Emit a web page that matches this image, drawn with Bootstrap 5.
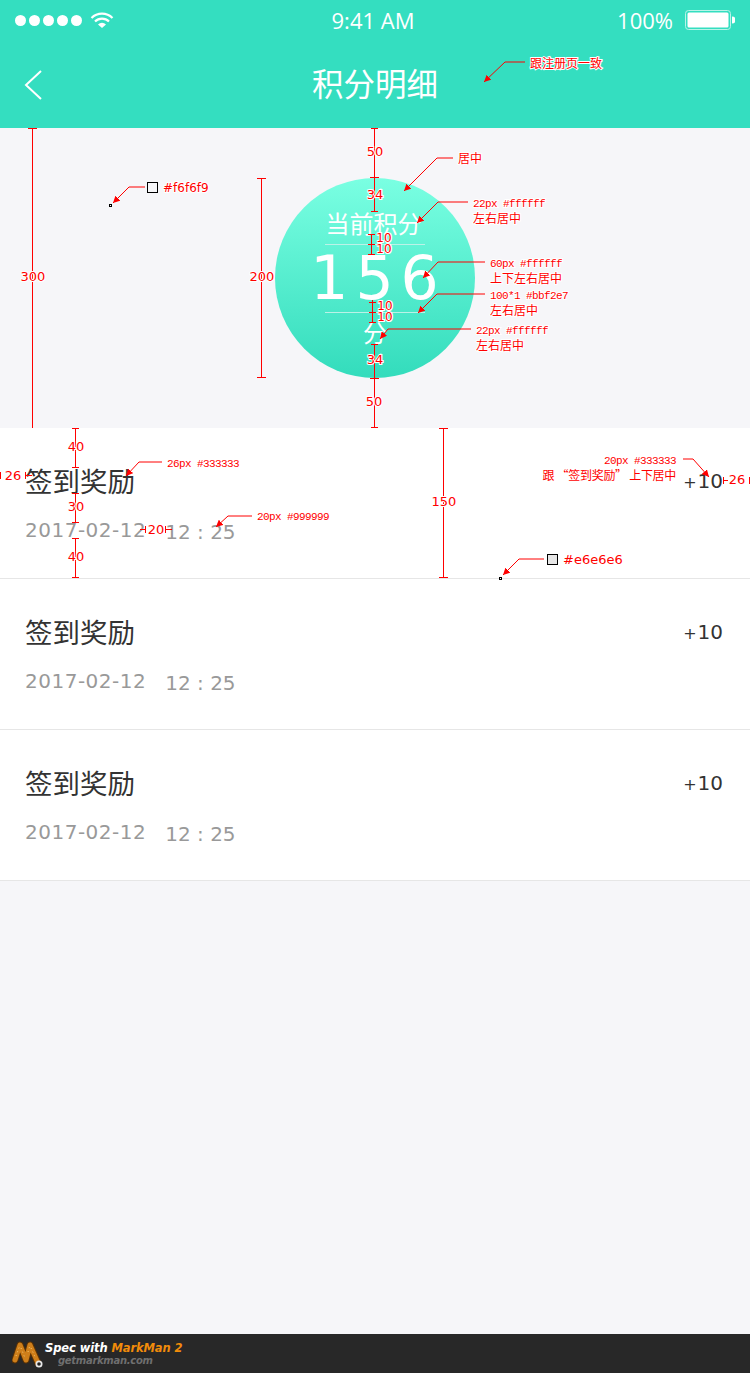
<!DOCTYPE html>
<html lang="zh-CN">
<head>
  <meta charset="UTF-8">
  <title>积分明细</title>
  <meta name="viewport" content="width=device-width, initial-scale=1">
  <link href="https://cdn.jsdelivr.net/npm/bootstrap@5.3.3/dist/css/bootstrap.min.css" rel="stylesheet">
  <style>
    html, body { margin: 0; background: #f6f6f9; }
    .spec-page {
      position: relative;
      width: 750px;
      height: 1373px;
      overflow: hidden;
      background: #f6f6f9;
      font-family: "DejaVu Sans", "Noto Sans CJK SC", sans-serif;
    }
    .app-head { height: 128px; background: #34dec0; color: #fff; flex: none; }
    .status-row { height: 40px; padding: 0 15px; font-family: "Open Sans", sans-serif; font-size: 22px; }
    .status-side { width: 240px; }
    .status-time { margin-left: -4px; }
    .status-dots { gap: 3px; margin-right: 8px; }
    .status-dots i { display: block; width: 11px; height: 11px; border-radius: 50%; background: #fff; }
    .head-row { height: 88px; position: relative; }
    .head-back { position: absolute; left: 24px; top: 29px; }
    .head-title { font-family: "Noto Sans CJK SC", sans-serif; font-size: 31.5px; line-height: 1; margin-top: -3px; }
    .score-band { height: 300px; padding-top: 50px; flex: none; }
    .score-disc {
      width: 200px;
      height: 200px;
      padding-top: 33px;
      border-radius: 50%;
      color: #fff;
      background: linear-gradient(#7affe2, #33dcbc);
      font-family: "Noto Sans CJK SC", sans-serif;
    }
    .score-cap { font-size: 24px; line-height: 23px; height: 23px; margin-left: -3px; }
    .score-unit { margin-top: -3px; margin-left: 0; }
    .score-rule { width: 100px; height: 1px; background: #bbf2e7; margin: 10px 0; flex: none; }
    .score-num { font-family: "DejaVu Sans", sans-serif; font-size: 60px; line-height: 47px; height: 47px; letter-spacing: 7px; margin-right: -6px; }
    .log-row { height: 151px; padding: 0 27px 0 25px; background: #fff; border-bottom: 1px solid #e6e6e6; flex: none; }
    .log-name { font-family: "Noto Sans CJK SC", sans-serif; font-size: 27.5px; line-height: 30px; color: #333; margin-top: 37px; }
    .log-time { font-size: 20px; line-height: 24px; color: #999; margin-top: 23px; letter-spacing: .5px; }
    .log-clock { margin-left: 19px; letter-spacing: 0; position: relative; top: 2px; }
    .log-pts { font-size: 20px; line-height: 30px; color: #333; margin-top: 38px; }
    .log-plus { font-size: 16px; margin-right: 1px; }
    .spec-foot { position: absolute; left: 0; right: 0; bottom: 0; height: 39px; background: #282828; padding-left: 12px; }
    .foot-logo { flex: none; margin-top: 4px; }
    .foot-main { font-size: 11.5px; line-height: 14px; font-weight: 700; font-style: italic; color: #fff; padding-top: 7px; letter-spacing: -.1px; }
    .foot-main span { color: #f28c0a; }
    .foot-sub { font-size: 10px; line-height: 12px; font-weight: 700; font-style: italic; color: #6f6f6f; padding-left: 13px; letter-spacing: -.3px; }
    .spec-marks { position: absolute; left: 0; top: 0; pointer-events: none; }
    .spec-marks line, .spec-marks polyline { stroke: #f00; stroke-width: 1; fill: none; }
    .spec-marks text { fill: #f00; stroke: #fff; stroke-width: 2px; paint-order: stroke; font-family: "DejaVu Sans", "Noto Sans CJK SC", sans-serif; font-size: 13px; }
    .spec-marks .mark-mono { font-family: "Liberation Mono", "Noto Sans CJK SC", monospace; font-size: 11px; letter-spacing: -.6px; }
    .spec-marks .mark-cjk { font-family: "Noto Sans CJK SC", sans-serif; font-size: 12px; }
    .spec-marks .mark-tight { letter-spacing: -.3px; }
    .spec-marks .mark-small { font-size: 12px; }
  </style>
</head>
<body>

<div class="spec-page d-flex flex-column">

  <!-- header -->
  <header class="app-head">
    <div class="status-row d-flex align-items-center justify-content-between">
      <div class="status-side d-flex align-items-center">
        <div class="status-dots d-flex"><i></i><i></i><i></i><i></i><i></i></div>
        <svg width="24" height="16" viewBox="0 0 24 16">
          <path d="M1.5 6 A15 15 0 0 1 22.5 6" fill="none" stroke="#fff" stroke-width="2.2"/>
          <path d="M5 9.5 A10 10 0 0 1 19 9.5" fill="none" stroke="#fff" stroke-width="2.2"/>
          <path d="M8 12.4 A6 6 0 0 1 16 12.4 L12 16 Z" fill="#fff"/>
        </svg>
      </div>
      <div class="status-time">9:41 AM</div>
      <div class="status-side d-flex align-items-center justify-content-end">
        <span class="me-2 pe-1">100%</span>
        <svg width="50" height="20" viewBox="0 0 50 20">
          <rect x=".5" y=".5" width="45" height="19" rx="3" fill="none" stroke="#b9f3e8"/>
          <rect x="2.5" y="2.5" width="41" height="15" rx="1.5" fill="#fff"/>
          <path d="M47 6.5 a3.5 3.5 0 0 1 0 7 Z" fill="#fff"/>
        </svg>
      </div>
    </div>
    <div class="head-row d-flex align-items-center justify-content-center">
      <svg class="head-back" width="19" height="31" viewBox="0 0 19 31">
        <path d="M17 2 L2 16 L17 30" fill="none" stroke="#fff" stroke-width="2"/>
      </svg>
      <div class="head-title">积分明细</div>
    </div>
  </header>

  <!-- current score -->
  <section class="score-band d-flex justify-content-center">
    <div class="score-disc d-flex flex-column align-items-center">
      <div class="score-cap">当前积分</div>
      <div class="score-rule"></div>
      <div class="score-num">156</div>
      <div class="score-rule"></div>
      <div class="score-cap score-unit">分</div>
    </div>
  </section>

  <!-- records -->
  <div class="log-row d-flex justify-content-between">
    <div>
      <div class="log-name">签到奖励</div>
      <div class="log-time">2017-02-12<span class="log-clock">12 : 25</span></div>
    </div>
    <div class="log-pts"><span class="log-plus">+</span>10</div>
  </div>
  <div class="log-row d-flex justify-content-between">
    <div>
      <div class="log-name">签到奖励</div>
      <div class="log-time">2017-02-12<span class="log-clock">12 : 25</span></div>
    </div>
    <div class="log-pts"><span class="log-plus">+</span>10</div>
  </div>
  <div class="log-row d-flex justify-content-between">
    <div>
      <div class="log-name">签到奖励</div>
      <div class="log-time">2017-02-12<span class="log-clock">12 : 25</span></div>
    </div>
    <div class="log-pts"><span class="log-plus">+</span>10</div>
  </div>

  <!-- MarkMan footer -->
  <footer class="spec-foot d-flex">
    <svg class="foot-logo" width="33" height="31" viewBox="0 0 33 31">
      <path d="M3 22 L8 7 L14 22 L18 7 L26 25" fill="none" stroke="#5a3206" stroke-width="7" stroke-linecap="round" stroke-linejoin="round"/>
      <path d="M3 22 L8 7 L14 22 L18 7 L26 25" fill="none" stroke="#cf7f1a" stroke-width="5" stroke-linecap="round" stroke-linejoin="round"/>
      <path d="M4 18 L8 7 M9 10 L13 20 M16 14 L18 7 M19 10 L24 21" fill="none" stroke="#f2c777" stroke-width="1" stroke-dasharray="1 3"/>
      <circle cx="27" cy="26" r="3.5" fill="#e8e8e8"/>
      <circle cx="27" cy="26" r="1.8" fill="#222"/>
    </svg>
    <div>
      <div class="foot-main">Spec with <span>MarkMan 2</span></div>
      <div class="foot-sub">getmarkman.com</div>
    </div>
  </footer>

  <!-- spec annotations drawn on top of the screen -->
  <svg class="spec-marks" width="750" height="1373" viewBox="0 0 750 1373">
    <defs>
      <marker id="tip" markerWidth="7" markerHeight="7" refX="7" refY="3.5" orient="auto" markerUnits="userSpaceOnUse">
        <path d="M0 0 L7 3.5 L0 7 Z" fill="#f00"/>
      </marker>
    </defs>

    <!-- dimension lines -->
    <line x1="32.5" y1="128" x2="32.5" y2="428"/><line x1="28" y1="128.5" x2="37" y2="128.5"/>
    <line x1="261.5" y1="178" x2="261.5" y2="378"/><line x1="257" y1="178.5" x2="266" y2="178.5"/><line x1="257" y1="377.5" x2="266" y2="377.5"/>
    <line x1="374.5" y1="128" x2="374.5" y2="211"/><line x1="371" y1="128.5" x2="378" y2="128.5"/><line x1="370" y1="177.5" x2="379" y2="177.5"/><line x1="371" y1="211.5" x2="378" y2="211.5"/>
    <line x1="371.5" y1="234" x2="371.5" y2="254"/><line x1="368" y1="234.5" x2="375" y2="234.5"/><line x1="368" y1="244.5" x2="375" y2="244.5"/><line x1="368" y1="254.5" x2="375" y2="254.5"/>
    <line x1="372.5" y1="300" x2="372.5" y2="322"/><line x1="369" y1="302.5" x2="376" y2="302.5"/><line x1="369" y1="312.5" x2="376" y2="312.5"/><line x1="369" y1="322.5" x2="376" y2="322.5"/>
    <line x1="374.5" y1="344" x2="374.5" y2="428"/><line x1="371" y1="344.5" x2="378" y2="344.5"/><line x1="370" y1="378.5" x2="379" y2="378.5"/><line x1="371" y1="427.5" x2="378" y2="427.5"/>
    <line x1="75.5" y1="428" x2="75.5" y2="468"/><line x1="75.5" y1="493" x2="75.5" y2="523"/><line x1="75.5" y1="538" x2="75.5" y2="578"/>
    <line x1="72" y1="428.5" x2="79" y2="428.5"/><line x1="72" y1="467.5" x2="79" y2="467.5"/><line x1="72" y1="493.5" x2="79" y2="493.5"/><line x1="72" y1="522.5" x2="79" y2="522.5"/><line x1="72" y1="538.5" x2="79" y2="538.5"/><line x1="72" y1="577.5" x2="79" y2="577.5"/>
    <line x1="443.5" y1="428" x2="443.5" y2="578"/><line x1="439" y1="428.5" x2="448" y2="428.5"/><line x1="439" y1="577.5" x2="448" y2="577.5"/>
    <line x1=".5" y1="472" x2=".5" y2="479"/><line x1="26" y1="475.5" x2="32" y2="475.5"/><line x1="25.5" y1="472" x2="25.5" y2="479"/>
    <line x1="723" y1="480.5" x2="728" y2="480.5"/><line x1="723.5" y1="477" x2="723.5" y2="484"/><line x1="749.5" y1="477" x2="749.5" y2="484"/>
    <line x1="140" y1="529.5" x2="146" y2="529.5"/><line x1="145.5" y1="526" x2="145.5" y2="533"/><line x1="165" y1="529.5" x2="172" y2="529.5"/><line x1="165.5" y1="526" x2="165.5" y2="533"/>

    <!-- dimension labels -->
    <text x="33" y="281" text-anchor="middle">300</text>
    <text x="262" y="281" text-anchor="middle">200</text>
    <text x="375" y="156" text-anchor="middle">50</text>
    <text x="375" y="199" text-anchor="middle">34</text>
    <text class="mark-small" x="384" y="242" text-anchor="middle">10</text>
    <text class="mark-small" x="384" y="253" text-anchor="middle">10</text>
    <text class="mark-small" x="385" y="310" text-anchor="middle">10</text>
    <text class="mark-small" x="385" y="321" text-anchor="middle">10</text>
    <text x="375" y="364" text-anchor="middle">34</text>
    <text x="374" y="406" text-anchor="middle">50</text>
    <text x="76" y="451" text-anchor="middle">40</text>
    <text x="76" y="511" text-anchor="middle">30</text>
    <text x="76" y="561" text-anchor="middle">40</text>
    <text x="444" y="506" text-anchor="middle">150</text>
    <text x="13" y="480" text-anchor="middle">26</text>
    <text x="737" y="484" text-anchor="middle">26</text>
    <text x="156" y="534" text-anchor="middle">20</text>

    <!-- leaders -->
    <polyline points="525,62 505,62 484,82" marker-end="url(#tip)"/>
    <polyline points="453,158 437,158 404,191" marker-end="url(#tip)"/>
    <polyline points="468,202 438,202 417,223" marker-end="url(#tip)"/>
    <polyline points="485,262 438,262 423,278" marker-end="url(#tip)"/>
    <polyline points="485,294 437,294 418,313" marker-end="url(#tip)"/>
    <polyline points="471,329 388,329 380,339" marker-end="url(#tip)"/>
    <polyline points="145,187 129,187 113,203" marker-end="url(#tip)"/>
    <polyline points="162,462 139,462 126,476" marker-end="url(#tip)"/>
    <polyline points="252,516 228,516 216,527" marker-end="url(#tip)"/>
    <polyline points="683,459 693,459 709,477" marker-end="url(#tip)"/>
    <polyline points="544,559 519,559 503,575" marker-end="url(#tip)"/>

    <!-- leader labels -->
    <text class="mark-cjk" x="530" y="68">跟注册页一致</text>
    <text class="mark-cjk" x="458" y="163">居中</text>
    <text class="mark-mono" x="473" y="207">22px #ffffff</text>
    <text class="mark-cjk" x="473" y="223">左右居中</text>
    <text class="mark-mono" x="490" y="267">60px #ffffff</text>
    <text class="mark-cjk" x="490" y="283">上下左右居中</text>
    <text class="mark-mono" x="490" y="299">100*1 #bbf2e7</text>
    <text class="mark-cjk" x="490" y="315">左右居中</text>
    <text class="mark-mono" x="476" y="334">22px #ffffff</text>
    <text class="mark-cjk" x="476" y="350">左右居中</text>
    <text class="mark-mono" x="167" y="467">26px #333333</text>
    <text class="mark-mono" x="257" y="520">20px #999999</text>
    <text class="mark-mono" x="676" y="464" text-anchor="end">20px #333333</text>
    <text class="mark-cjk mark-tight" x="676" y="480" text-anchor="end">跟 “签到奖励” 上下居中</text>

    <!-- colour swatches -->
    <rect x="147.5" y="182.5" width="10" height="10" fill="#f6f6f9" stroke="#000"/>
    <rect x="109.5" y="204.5" width="2" height="2" fill="#fff" stroke="#000"/>
    <text class="mark-small" x="163" y="192">#f6f6f9</text>
    <rect x="547.5" y="554.5" width="10" height="10" fill="#e6e6e6" stroke="#000"/>
    <rect x="499.5" y="577.5" width="2" height="2" fill="#fff" stroke="#000"/>
    <text x="563" y="564">#e6e6e6</text>
  </svg>
</div>

<script src="https://cdn.jsdelivr.net/npm/bootstrap@5.3.3/dist/js/bootstrap.bundle.min.js"></script>
</body>
</html>
